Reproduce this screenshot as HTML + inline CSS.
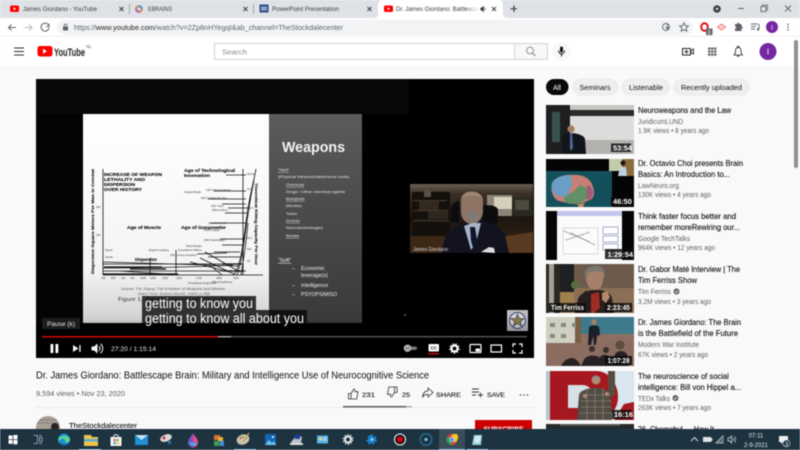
<!DOCTYPE html>
<html lang="en"><head><meta charset="utf-8"><title>Dr. James Giordano: Battlescape Brain - YouTube</title>
<style>
html,body{margin:0;padding:0;width:800px;height:450px;overflow:hidden;background:#f9f9f9}
svg{display:block;position:absolute;left:0;top:0}
text{font-family:"Liberation Sans",sans-serif;white-space:pre}
.tab{font-size:6.6px;fill:#3c4043}
.tt{font-size:8.6px;fill:#0f0f0f;stroke:#0f0f0f;stroke-width:.12}
.ch{font-size:7.2px;fill:#606060}
.du{font-size:7.4px;fill:#fff;font-weight:bold}
.ctl{font-size:6.6px;fill:#e8e8e8}
.cp{font-size:7.6px;fill:#0f0f0f}
.cb{font-size:6.6px;fill:#0f0f0f;stroke:#0f0f0f;stroke-width:.1}
.b{font-weight:bold;fill:#111;stroke:#111;stroke-width:.12}
.sl{fill:#e8e8e8;font-size:3.9px}
.sb{fill:#f2f2f2;font-size:5.4px}
</style></head><body>
<svg width="800" height="450" viewBox="0 0 800 450" xmlns="http://www.w3.org/2000/svg">
<defs>
<linearGradient id="slg" x1="0" y1="0" x2="0" y2="1"><stop offset="0" stop-color="#5b5b5b"/><stop offset=".5" stop-color="#4a4a4a"/><stop offset="1" stop-color="#3a3a3a"/></linearGradient>
<linearGradient id="wh" x1="0" y1="0" x2="0" y2="1"><stop offset="0" stop-color="#fff"/><stop offset=".75" stop-color="#f4f4f4"/><stop offset="1" stop-color="#cfcfcf"/></linearGradient>
<linearGradient id="ctrl" x1="0" y1="0" x2="0" y2="1"><stop offset="0" stop-color="#000" stop-opacity="0"/><stop offset="1" stop-color="#000" stop-opacity=".6"/></linearGradient>
<linearGradient id="fade" x1="0" y1="0" x2="1" y2="0"><stop offset="0" stop-color="#fff" stop-opacity="0"/><stop offset="1" stop-color="#fff"/></linearGradient>
<linearGradient id="wc" x1="0" y1="0" x2="0" y2="1"><stop offset="0" stop-color="#6a5f51"/><stop offset=".14" stop-color="#3a3026"/><stop offset=".5" stop-color="#1d1610"/><stop offset="1" stop-color="#3a2617"/></linearGradient>
<clipPath id="page"><rect x="0" y="0" width="800" height="429"/></clipPath>
<clipPath id="tabclip"><rect x="392" y="0" width="86" height="18"/></clipPath>
<clipPath id="th1"><rect x="546" y="105" width="88" height="49"/></clipPath>
<clipPath id="th2"><rect x="546" y="159" width="88" height="48"/></clipPath>
<clipPath id="th3"><rect x="546" y="211" width="88" height="49"/></clipPath>
<clipPath id="th4"><rect x="546" y="264" width="88" height="49"/></clipPath>
<clipPath id="th5"><rect x="546" y="317" width="88" height="49"/></clipPath>
<clipPath id="th6"><rect x="546" y="371" width="88" height="49"/></clipPath>
<clipPath id="cam"><rect x="410" y="184" width="123" height="69"/></clipPath>
<clipPath id="av"><circle cx="48" cy="428" r="12"/></clipPath>
</defs>
<g style="filter:blur(.45px)">
<!-- page -->
<rect width="800" height="450" fill="#f9f9f9"/>
<!-- Tab strip -->
<rect width="800" height="18" fill="#dee1e6"/>
<path d="M374 18c3 0 4-2 4-4V5c0-3 2-5 5-5h116c3 0 4 2 4 5v9c0 2 1 4 4 4z" fill="#fff"/>
<rect x="10" y="5.500" width="9" height="6.500" rx="1.500" fill="#f00"/><path d="M13.600 7.300v3l2.400-1.500z" fill="#fff"/>
<text class="tab" x="23" y="11" textLength="74" lengthAdjust="spacingAndGlyphs">James Giordano - YouTube</text>
<path d="M119.500 7l4 4m0-4l-4 4" stroke="#3c4043" stroke-width="1"/>
<rect x="129" y="4" width="1" height="10" fill="#a4a7ab"/>
<circle cx="139" cy="9" r="4" fill="#e0915a"/><path d="M139 5a4 4 0 0 1 4 4h-4z" fill="#55a7d8"/><path d="M135 9a4 4 0 0 0 4 4V9z" fill="#9a7cc5"/><circle cx="139" cy="9" r="1.300" fill="#eee"/>
<text class="tab" x="148" y="11" textLength="24" lengthAdjust="spacingAndGlyphs">EBRAINS</text>
<path d="M243.500 7l4 4m0-4l-4 4" stroke="#3c4043" stroke-width="1"/>
<rect x="253" y="4" width="1" height="10" fill="#a4a7ab"/>
<rect x="259.500" y="4.500" width="9" height="8" fill="#2e4a86"/><rect x="261" y="6.500" width="6" height="4" fill="#8fa3c9"/>
<text class="tab" x="272" y="11" textLength="67" lengthAdjust="spacingAndGlyphs">PowerPoint Presentation</text>
<path d="M367.500 7l4 4m0-4l-4 4" stroke="#3c4043" stroke-width="1"/>
<rect x="384" y="5.500" width="9" height="6.500" rx="1.500" fill="#f00"/><path d="M387.600 7.300v3l2.400-1.500z" fill="#fff"/>
<g clip-path="url(#tabclip)"><text class="tab" x="396" y="11" textLength="88" lengthAdjust="spacingAndGlyphs">Dr. James Giordano: Battlescape</text></g>
<rect x="466" y="3" width="13" height="12" fill="url(#fade)"/>
<path d="M480.500 7.500h1.500l2-1.800v6.600l-2-1.800h-1.500z M485 7.500a2 2 0 0 1 0 3" fill="#3c4043"/>
<path d="M492 7l4 4m0-4l-4 4" stroke="#3c4043" stroke-width="1"/>
<path d="M514 5.500v6.500M510.500 8.800h6.500" stroke="#3c4043" stroke-width="1.200"/>
<circle cx="717" cy="9" r="3.800" fill="#3c4043"/><path d="M715.300 8l1.700 2.500 1.700-2.500z" fill="#dee1e6"/>
<rect x="738" y="8" width="6" height="1" fill="#5f6368"/>
<rect x="761" y="6.500" width="5" height="5" fill="none" stroke="#5f6368" stroke-width=".9"/><path d="M762.500 6.300v-1.300h5v5h-1.200" fill="none" stroke="#5f6368" stroke-width=".8"/>
<path d="M785 5.500l6 6m0-6l-6 6" stroke="#5f6368" stroke-width=".9"/>
<!-- Toolbar -->
<rect y="18" width="800" height="18" fill="#fff"/>
<rect y="36" width="800" height=".6" fill="#e4e4e4"/>
<rect x="57" y="20" width="636" height="15" rx="7.500" fill="#f1f3f4"/>
<path d="M16 27.500H8.500m3-3l-3 3 3 3" fill="none" stroke="#5f6368" stroke-width="1"/>
<path d="M24.500 27.500H32m-3-3l3 3-3 3" fill="none" stroke="#b5b8bc" stroke-width="1"/>
<path d="M48.500 25a4 4 0 1 0 .5 3M49 23.800v2.800h-2.800" fill="none" stroke="#5f6368" stroke-width="1"/>
<rect x="63" y="26.500" width="5" height="4" rx=".6" fill="#5f6368"/><path d="M64.200 26.500v-1a1.300 1.300 0 0 1 2.600 0v1" fill="none" stroke="#5f6368" stroke-width=".8"/>
<text x="74" y="30" font-size="7.200" fill="#5f6368" textLength="269" lengthAdjust="spacingAndGlyphs">https://<tspan fill="#202124">www.youtube.com</tspan>/watch?v=2Zp8nHYegqI&amp;ab_channel=TheStockdalecenter</text>
<circle cx="666" cy="27" r="3.500" fill="none" stroke="#5f6368" stroke-width=".9"/><path d="M667.500 24v4.500m-2-1.500l2 2 2-2" fill="none" stroke="#5f6368" stroke-width=".9"/>
<path d="M684 22.800l1.300 2.900 3.100.3-2.300 2.100.7 3.100-2.800-1.600-2.800 1.600.7-3.100-2.300-2.100 3.100-.3z" fill="none" stroke="#5f6368" stroke-width=".9"/>
<ellipse cx="704.500" cy="27" rx="3.300" ry="3.800" fill="none" stroke="#e60000" stroke-width="1.800"/>
<rect x="706" y="28.500" width="6.500" height="6.500" fill="#666"/><text x="707.500" y="34" font-size="5" fill="#fff">3</text>
<path d="M717.500 27l4-3 4 3-4 3z" fill="#fbd0d0" stroke="#f87878" stroke-width="1"/>
<path d="M735 24h2a1.200 1.200 0 0 1 2.400 0h2.100v2.200a1.200 1.200 0 0 1 0 2.400v2.400h-6.500v-2.400a1.200 1.200 0 0 0 0-2.400z" fill="#5f6368"/>
<path d="M751 24h7M751 26.500h5M751 29h4" stroke="#5f6368" stroke-width=".9"/><path d="M759 24v5" stroke="#5f6368" stroke-width="1"/><circle cx="758" cy="29.500" r="1.200" fill="#5f6368"/>
<circle cx="772" cy="27" r="6" fill="#7627a2"/><text x="772" y="29.500" font-size="6.500" fill="#fff" text-anchor="middle">I</text>
<g fill="#5f6368"><circle cx="788" cy="24.300" r=".8"/><circle cx="788" cy="27" r=".8"/><circle cx="788" cy="29.700" r=".8"/></g>
<!-- Masthead -->
<rect y="36.600" width="800" height="29.400" fill="#fff"/>
<path d="M14 48h10M14 51.500h10M14 55h10" stroke="#303030" stroke-width="1"/>
<rect x="37.500" y="46" width="15" height="10.500" rx="2.500" fill="#f00"/><path d="M43 48.800v5l4-2.500z" fill="#fff"/>
<text x="54" y="56" font-size="11" fill="#212121" font-weight="bold" textLength="31" lengthAdjust="spacingAndGlyphs">YouTube</text>
<text x="86" y="48" font-size="4.500" fill="#606060">NL</text>
<rect x="214.500" y="43.500" width="300" height="16" fill="#fff" stroke="#d3d3d3"/>
<rect x="514.500" y="43.500" width="33" height="16" fill="#f8f8f8" stroke="#d3d3d3"/>
<text x="222" y="54.500" font-size="7.600" fill="#8a8a8a" textLength="25" lengthAdjust="spacingAndGlyphs">Search</text>
<circle cx="530" cy="50.500" r="3.400" fill="none" stroke="#777" stroke-width=".8"/><path d="M532.500 53l3 3" stroke="#777" stroke-width=".9"/>
<circle cx="561.500" cy="51.500" r="9.500" fill="#f8f8f8"/>
<rect x="560" y="46.500" width="3" height="6" rx="1.500" fill="#111"/><path d="M558.500 50.500c0 4.500 6 4.500 6 0M561.500 53.800v2.700" fill="none" stroke="#111" stroke-width="1"/>
<rect x="682.500" y="48.500" width="8" height="6.500" fill="none" stroke="#222" stroke-width="1"/><path d="M691 50.500l2.500-1.500v5l-2.500-1.500z" fill="none" stroke="#222" stroke-width=".9"/><path d="M684.500 51.800h4M686.500 49.800v4" stroke="#222" stroke-width="1"/>
<g fill="#666"><rect x="708" y="47.500" width="2.400" height="2.200"/><rect x="711" y="47.500" width="2.400" height="2.200"/><rect x="714" y="47.500" width="2.400" height="2.200"/><rect x="708" y="50.500" width="2.400" height="2.200"/><rect x="711" y="50.500" width="2.400" height="2.200"/><rect x="714" y="50.500" width="2.400" height="2.200"/><rect x="708" y="53.500" width="2.400" height="2.200"/><rect x="711" y="53.500" width="2.400" height="2.200"/><rect x="714" y="53.500" width="2.400" height="2.200"/></g>
<path d="M734 55h8.500c-1.200-1-1.500-2-1.500-4 0-2.200-1-3.500-2.700-3.500S735.500 48.800 735.500 51c0 2-.3 3-1.500 4zM737.200 47.500v-1h2v1M737 55.500c.3 1.200 2 1.200 2.300 0" fill="none" stroke="#222" stroke-width=".8"/>
<circle cx="768" cy="51.500" r="8.500" fill="#7627a2"/><text x="768" y="54.500" font-size="8" fill="#fff" text-anchor="middle">I</text>
<rect x="794" y="40" width="4" height="128" rx="2" fill="#909090"/>
<g clip-path="url(#page)">
<!-- Player -->
<rect x="36" y="79" width="498" height="279" fill="#000"/>
<rect x="36" y="79" width="373" height="35" fill="#080808"/>
<rect x="36" y="114" width="47" height="209" fill="#040404"/>
<rect x="83" y="114" width="186" height="209" fill="url(#wh)"/>
<rect x="269" y="114" width="93" height="209" fill="url(#slg)"/>
<!-- Chart -->
<g fill="none" stroke="#111" stroke-width=".8">
<path d="M103 169v106M103 275h160M243 169v106M103 271h143M103 264h140M103 262l136 4M103 268c40 0 100-1 130-3M120 271l60 4M150 258v17M176 250v25M200 258l34 16M190 262l40 10M222 275l-10 -8M234 275c8-12 10-40 13-60 2-16 6-30 9-46M237 275c6-16 8-44 11-60 2-14 4-26 6-34M241 275c3-18 5-30 7-52"/>
<path d="M208 257h32M214 252h26M205 252l35 20M197 254l30-1M226 175h20M214 191h32M208 199h38M222 204h24M228 208h20M225 213h22M210 223h36M220 239h24M222 245h22"/>
</g>
<g stroke="#111" stroke-width="1.300" fill="none"><path d="M103 274h75M104 267h58M130 269h36M222 264h20M224 271h20"/></g>
<g class="b">
<text x="104" y="176" font-size="4.300" font-weight="bold" textLength="58" lengthAdjust="spacingAndGlyphs">INCREASE OF WEAPON</text>
<text x="104" y="181" font-size="4.300" font-weight="bold" textLength="41" lengthAdjust="spacingAndGlyphs">LETHALITY AND</text>
<text x="104" y="186" font-size="4.300" font-weight="bold" textLength="31" lengthAdjust="spacingAndGlyphs">DISPERSION</text>
<text x="104" y="191" font-size="4.300" font-weight="bold" textLength="38" lengthAdjust="spacingAndGlyphs">OVER HISTORY</text>
<text x="184" y="172" font-size="4.500" font-weight="bold" textLength="51" lengthAdjust="spacingAndGlyphs">Age of Technological</text>
<text x="184" y="177" font-size="4.500" font-weight="bold" textLength="26" lengthAdjust="spacingAndGlyphs">Innovation</text>
<text x="127" y="229" font-size="4.500" font-weight="bold" textLength="34" lengthAdjust="spacingAndGlyphs">Age of Muscle</text>
<text x="181" y="229" font-size="4.500" font-weight="bold" textLength="45" lengthAdjust="spacingAndGlyphs">Age of Gunpowder</text>
<text x="135" y="261" font-size="4.300" font-weight="bold" textLength="22" lengthAdjust="spacingAndGlyphs">Dispersion</text>
<text transform="translate(94,274) rotate(-90)" font-size="3.800" font-weight="bold" textLength="105" lengthAdjust="spacingAndGlyphs">Dispersion Square Meters Per Man in Combat</text>
<text transform="translate(255,183) rotate(90)" font-size="3.800" font-weight="bold" textLength="82" lengthAdjust="spacingAndGlyphs">Theoretical Killing Capacity Per Hour</text>
</g>
<g font-size="2.600" fill="#333">
<text x="184" y="193">Guided Missile</text><text x="206" y="191">1967 Machine Airliner</text><text x="201" y="199">WW II Fighter Bomber</text><text x="211" y="207">WW I Tank</text><text x="212" y="211">Rifled Artillery</text><text x="208" y="224">Combat Aircraft</text><text x="204" y="231">WW II Fighter</text><text x="204" y="241">WW I Machinegun</text><text x="186" y="247">Rifled Musket</text><text x="178" y="251">Smoothbore Artillery</text><text x="170" y="256">16th Century Arquebus</text><text x="149" y="251">English Longbow</text><text x="105" y="251">Sword</text><text x="105" y="258">Javelin</text><text x="188" y="284">Smoothbore Small Arms</text><text x="212" y="283">Rifled Small Arms</text>
<text x="101" y="279">400</text><text x="111" y="279">500</text><text x="121" y="279">100</text><text x="130" y="279">100</text><text x="140" y="279">1000</text><text x="150" y="279">1200</text><text x="162" y="279">1300</text><text x="176" y="279">1500</text><text x="196" y="279">1700</text><text x="216" y="279">1800</text><text x="233" y="279">1900</text>
<text x="247" y="175">500 M</text><text x="247" y="190">50 M</text><text x="247" y="209">500 K</text><text x="247" y="239">50 K</text><text x="247" y="250">500</text><text x="247" y="262">50</text><text x="96" y="208">20K</text><text x="96" y="236">200</text>
</g>
<text x="121" y="290" font-size="3.500" fill="#555" textLength="104" lengthAdjust="spacingAndGlyphs">Source: T.N. Dupuy, The Evolution of Weapons and Warfare</text>
<text x="138" y="295" font-size="3.500" fill="#666" textLength="72" lengthAdjust="spacingAndGlyphs">(New York: Bobbs-Merrill, 1980) p.288</text>
<text x="118" y="301" font-size="5" fill="#333" textLength="132" lengthAdjust="spacingAndGlyphs">Figure 1.  Relationship of Lethality to Dispersion</text>
<!-- Weapons text -->
<text x="282" y="152" font-size="15" fill="#f4f4f4" font-weight="bold" textLength="63" lengthAdjust="spacingAndGlyphs">Weapons</text>
<text class="sl" x="278" y="171" text-decoration="underline">“Hard”</text>
<text class="sl" x="278" y="178" textLength="71" lengthAdjust="spacingAndGlyphs">(Physical influence/deterrence tools)</text>
<text class="sl" x="286" y="186" text-decoration="underline">Chemicals</text>
<text class="sl" x="286" y="193" textLength="59" lengthAdjust="spacingAndGlyphs">Drugs / Other chemical agents</text>
<text class="sl" x="286" y="200" text-decoration="underline">Biologicals</text>
<text class="sl" x="286" y="207">Microbes</text>
<text class="sl" x="286" y="215">Toxins</text>
<text class="sl" x="286" y="222" text-decoration="underline">Devices</text>
<text class="sl" x="286" y="229" textLength="37" lengthAdjust="spacingAndGlyphs">Neurotechnologies</text>
<text class="sl" x="286" y="237" text-decoration="underline">Biodata</text>
<text class="sb" x="278" y="262" text-decoration="underline">“Soft”</text>
<text class="sb" x="292" y="270">–</text><text class="sb" x="301" y="270">Economic</text>
<text class="sb" x="301" y="277">leverage(s)</text>
<text class="sb" x="292" y="287">–</text><text class="sb" x="301" y="287">Intelligence</text>
<text class="sb" x="292" y="296">–</text><text class="sb" x="301" y="296" textLength="36" lengthAdjust="spacingAndGlyphs">PSYOPS/MISO</text>
<!-- Webcam -->
<g clip-path="url(#cam)">
<rect x="410" y="184" width="123" height="69" fill="url(#wc)"/>
<!-- bookshelves -->
<rect x="412" y="192" width="38" height="44" fill="#14100c"/>
<g fill="#40352a"><rect x="413" y="200" width="34" height="1.300"/><rect x="413" y="210" width="36" height="1.300"/><rect x="413" y="220" width="36" height="1.300"/></g>
<rect x="419" y="201" width="20" height="9" fill="#33291f"/><rect x="428" y="211" width="20" height="8" fill="#2e261d"/><rect x="424" y="190" width="7" height="7" fill="#5b5043"/>
<!-- room right -->
<rect x="487" y="195" width="25" height="21" fill="#8b8476"/><rect x="494" y="197" width="18" height="12" fill="#d6cfbe"/>
<rect x="513" y="198" width="20" height="18" fill="#2a2721"/><rect x="515" y="200" width="14" height="10" fill="#4e4a40"/>
<path d="M497 253l4-16 32-5v21z" fill="#5a3a20"/>
<rect x="410" y="236" width="34" height="17" fill="#3c2817"/>
<!-- chair -->
<path d="M451 222v-14c0-4 6-7 8-7v22zM483 224v-18c6-2 15 0 15 4v14z" fill="#0c0c0e"/>
<!-- suit -->
<path d="M442 253c1-13 6-24 16-28l11-4 14 0c11 2 18 7 22 14l4 18z" fill="#12131f"/>
<!-- head -->
<path d="M461 199c1-10 20-10 22 0l0 13c-1 8-6 12-11 12-6 0-11-5-11-12z" fill="#8e7463"/>
<path d="M462 197c3-7 18-7 20 1-6-3-14-3-20-1z" fill="#a08676"/>
<path d="M466 213c3-2 10-2 13 0l-1 7-5 3-5-3z" fill="#7f7a75"/>
<!-- shirt/tie -->
<path d="M464 226l8-3 9 0-5 20-5 7z" fill="#a6b4c8"/>
<path d="M470 227l5 0 2 13-3 11-3-10z" fill="#10172a"/>
<path d="M481 252l8-5 5 1 1 5z" fill="#ddd"/>
<text x="413" y="251" font-size="5" fill="#ddd" textLength="35" lengthAdjust="spacingAndGlyphs">James Giordano</text>
</g>
<rect x="507" y="310" width="21" height="21" fill="#b9bcc0"/><circle cx="517.500" cy="320.500" r="8" fill="#d5d5d8" stroke="#39436a" stroke-width="1"/><path d="M517.500 314l1.800 4.600h5l-4 3 1.500 4.800-4.300-2.900-4.300 2.900 1.500-4.800-4-3h5z" fill="#8a7d40" stroke="#2b3260" stroke-width=".6"/>
<circle cx="405" cy="315" r=".8" fill="#aaa"/>
<rect x="36" y="318" width="498" height="40" fill="url(#ctrl)"/>
<!-- Captions -->
<rect x="142" y="296" width="114" height="14" fill="#080808" fill-opacity=".8"/>
<rect x="142" y="310" width="165" height="14" fill="#080808" fill-opacity=".8"/>
<text x="145" y="308" font-size="13.500" fill="#fff" textLength="108" lengthAdjust="spacingAndGlyphs">getting to know you</text>
<text x="145" y="323" font-size="13.500" fill="#fff" textLength="159" lengthAdjust="spacingAndGlyphs">getting to know all about you</text>
<!-- Tooltip -->
<rect x="42" y="318" width="38" height="11" rx="1" fill="#1c1c1c"/>
<text x="47" y="326" font-size="6.200" fill="#e6e6e6" textLength="28" lengthAdjust="spacingAndGlyphs">Pause (k)</text>
<!-- Progress -->
<rect x="42" y="336" width="485" height="1.400" fill="#55555a"/>
<rect x="42" y="336" width="189" height="1.400" fill="#a6a6a6"/>
<rect x="42" y="336" width="176" height="1.400" fill="#d80000"/>
<!-- Controls -->
<rect x="50.500" y="344" width="2.800" height="9" fill="#fff"/><rect x="55.500" y="344" width="2.800" height="9" fill="#fff"/>
<path d="M73 345v7l5.500-3.500z" fill="#f2f2f2"/><rect x="79.300" y="345" width="1.300" height="7" fill="#f2f2f2"/>
<path d="M91.500 346.500h2.500l3.500-3v10l-3.500-3h-2.500z" fill="#f2f2f2"/><path d="M99 346a3.500 3.500 0 0 1 0 5M100.500 343.800a6 6 0 0 1 0 9.400" fill="none" stroke="#f2f2f2" stroke-width="1"/>
<text class="ctl" x="111" y="351" textLength="45" lengthAdjust="spacingAndGlyphs">27:20 / 1:15:14</text>
<rect x="405" y="346.500" width="12" height="3.500" rx="1.700" fill="#777"/><circle cx="407.500" cy="348.300" r="3.700" fill="#b8b8b8"/><path d="M406.500 346.800v3M408.500 346.800v3" stroke="#444" stroke-width=".7"/>
<rect x="428.500" y="344" width="10.500" height="7.500" rx="1" fill="#fff"/><text x="433.700" y="349.500" font-size="4.500" font-weight="bold" fill="#222" text-anchor="middle">CC</text><rect x="428" y="353" width="11" height="1.500" fill="#d40000"/>
<circle cx="454.500" cy="348.500" r="3" fill="none" stroke="#fff" stroke-width="2.200"/><circle cx="454.500" cy="348.500" r="4.600" fill="none" stroke="#fff" stroke-width="1.300" stroke-dasharray="1.600 1.600"/>
<rect x="470" y="344.500" width="11" height="8" rx=".8" fill="none" stroke="#fff" stroke-width="1.200"/><rect x="475.500" y="348.500" width="4.500" height="3" fill="#fff"/>
<rect x="491" y="345" width="10.500" height="7" fill="none" stroke="#fff" stroke-width="1.200"/>
<path d="M513 347v-3h3M519 344h3v3M522 350v3h-3M516 353h-3v-3" fill="none" stroke="#fff" stroke-width="1.200"/>
<!-- Under player -->
<text x="36" y="378.500" font-size="10" fill="#0f0f0f" textLength="393" lengthAdjust="spacingAndGlyphs">Dr. James Giordano: Battlescape Brain: Military and Intelligence Use of Neurocognitive Science</text>
<text x="36" y="396" font-size="7.200" fill="#606060" textLength="89" lengthAdjust="spacingAndGlyphs">9,594 views • Nov 23, 2020</text>
<path d="M348.500 393.500h2.500v5.500h-2.500zM351 393.500l2.800-4.500c1.200 0 1.300 1.200 1 2.700h3.200l-1.300 7.300H351" fill="none" stroke="#333" stroke-width=".8"/>
<text class="cb" x="362" y="397" textLength="13" lengthAdjust="spacingAndGlyphs">231</text>
<path d="M397 392.500h-2.500V387H397zM394.500 392.500l-2.800 4.500c-1.200 0-1.300-1.200-1-2.700h-3.200l1.300-7.300h5.700" fill="none" stroke="#333" stroke-width=".8"/>
<text class="cb" x="402" y="397" textLength="8" lengthAdjust="spacingAndGlyphs">25</text>
<path d="M428 388l5 4.500-5 4.500v-2.700c-3 0-4.500 1-5.500 3.200.3-4.500 2.500-6.500 5.500-6.700z" fill="none" stroke="#333" stroke-width=".8"/>
<text class="cb" x="436" y="397" textLength="25" lengthAdjust="spacingAndGlyphs">SHARE</text>
<path d="M472 389h7M472 392h7M472 395h4M478 395h5M480.500 392.500v5" stroke="#333" stroke-width=".9"/>
<text class="cb" x="487" y="397" textLength="18" lengthAdjust="spacingAndGlyphs">SAVE</text>
<g fill="#444"><circle cx="520.500" cy="395" r=".8"/><circle cx="524" cy="395" r=".8"/><circle cx="527.500" cy="395" r=".8"/></g>
<rect x="36" y="407" width="498" height=".7" fill="#e3e3e3"/>
<rect x="343" y="406" width="69" height="1.400" fill="#aaa"/><rect x="343" y="406" width="63" height="1.400" fill="#555"/>
<g clip-path="url(#av)"><rect x="36" y="416" width="24" height="24" fill="#a89f95"/><path d="M36 420h24M36 423h24" stroke="#8a8178" stroke-width="1"/><circle cx="55" cy="427" r="4" fill="#2a2422"/></g>
<text x="69" y="428" font-size="7.200" fill="#0f0f0f" stroke="#0f0f0f" stroke-width=".1" textLength="68" lengthAdjust="spacingAndGlyphs">TheStockdalecenter</text>
<rect x="475" y="420" width="57" height="14" rx="1" fill="#cc0000"/>
<text x="503.500" y="431" font-size="6.800" font-weight="bold" fill="#fff" text-anchor="middle">SUBSCRIBE</text>
<!-- Chips -->
<rect x="546" y="79" width="22.500" height="16" rx="8" fill="#0a0a0a"/><text x="557" y="90" font-size="7.200" fill="#fff" text-anchor="middle">All</text>
<rect x="573" y="79" width="44.500" height="16" rx="8" fill="#efefef" stroke="#e2e2e2" stroke-width=".6"/><text class="cp" x="579.500" y="90" textLength="31" lengthAdjust="spacingAndGlyphs">Seminars</text>
<rect x="622" y="79" width="47.500" height="16" rx="8" fill="#efefef" stroke="#e2e2e2" stroke-width=".6"/><text class="cp" x="629" y="90" textLength="34" lengthAdjust="spacingAndGlyphs">Listenable</text>
<rect x="674" y="79" width="75" height="16" rx="8" fill="#efefef" stroke="#e2e2e2" stroke-width=".6"/><text class="cp" x="681" y="90" textLength="61" lengthAdjust="spacingAndGlyphs">Recently uploaded</text>
<!-- Thumb 1 -->
<g clip-path="url(#th1)">
<rect x="546" y="105" width="88" height="49" fill="#c8c7c3"/><rect x="546" y="105" width="24" height="49" fill="#1d1f20"/><rect x="570" y="110" width="64" height="6" fill="#2a2a2a"/><rect x="570" y="116" width="64" height="24" fill="#dcdcdb"/><rect x="570" y="140" width="64" height="14" fill="#b3b2ae"/>
<rect x="552" y="112" width="8" height="30" fill="#39524f"/>
<circle cx="571" cy="129" r="3.600" fill="#a57b64"/><path d="M562 154v-17c0-3 4-4 9-4s13 2 14 6l1 15z" fill="#12151b"/><path d="M570 133h2l1 15-2 3-1-3z" fill="#53689c"/>
<rect x="611" y="143.500" width="20" height="8.500" fill="#111" fill-opacity=".85"/><text class="du" x="613" y="150.500">53:54</text>
</g>
<!-- Thumb 2 -->
<g clip-path="url(#th2)">
<rect x="546" y="159" width="88" height="48" fill="#050505"/><rect x="546" y="171" width="66" height="36" fill="#14505c"/><rect x="609" y="159" width="13" height="12" fill="#c3cca8"/><rect x="622" y="159" width="12" height="17" fill="#8b6d3e"/>
<circle cx="623" cy="163" r="2.500" fill="#1c1410"/><path d="M618 176l2-9h6l1 9z" fill="#bcd2de"/>
<path d="M552 183c3-6 14-9 21-8 9-1 18 3 20 12 2 6 1 11-3 13l-8 3-6 1c-7 0-12-2-17-3-6-2-9-11-7-18z" fill="#c67f74"/>
<path d="M552 183c3-6 12-8 19-8l1 10-5 11c-5 1-10 0-12-2-3-3-4-7-3-11z" fill="#6a9ec6"/>
<path d="M564 197l10-6 6-6 7 3 1 10-8 5-10 1-6-3z" fill="#629067"/>
<path d="M587 185c3 0 6 4 6 9l-3 6-3-1z" fill="#a55a7a"/>
<path d="M577 204c3 0 6 0 8-2l-2 5h-4z" fill="#c69060"/>
<rect x="611" y="197" width="21" height="9" fill="#0a0a0a"/><text class="du" x="613" y="203.800">46:50</text>
</g>
<!-- Thumb 3 -->
<g clip-path="url(#th3)">
<rect x="546" y="211" width="88" height="49" fill="#050505"/><rect x="557" y="211" width="65" height="49" fill="#fbfbfb"/><rect x="557" y="211" width="65" height="5" fill="#c4c5ef"/>
<path d="M564 231l26 11M566 240l24-8M571 233l24 12" stroke="#777" stroke-width="1" stroke-dasharray="1.500 1"/><rect x="563" y="228" width="35" height="26" fill="none" stroke="#aaa" stroke-width=".4"/>
<rect x="603" y="227" width="15" height="7" fill="#fff" stroke="#6a7aaa" stroke-width=".6"/><rect x="603" y="236" width="15" height="6" fill="#fff" stroke="#6a7aaa" stroke-width=".6"/><rect x="603" y="244" width="15" height="6" fill="#fff" stroke="#6a7aaa" stroke-width=".6"/>
<rect x="605" y="249" width="28" height="10" fill="#0c0c0c" fill-opacity=".85"/><text class="du" x="607.500" y="257">1:29:54</text>
</g>
<!-- Thumb 4 -->
<g clip-path="url(#th4)">
<rect x="546" y="264" width="88" height="49" fill="#8b6f55"/><rect x="546" y="264" width="14" height="49" fill="#2d2720"/><rect x="549" y="264" width="5" height="49" fill="#a3a098"/><rect x="560" y="264" width="14" height="32" fill="#1e2021"/><rect x="574" y="264" width="60" height="24" fill="#6d5a4c"/><rect x="560" y="292" width="14" height="21" fill="#a17f4e"/><circle cx="575" cy="285" r="4" fill="#596d3f"/>
<path d="M575 313l3-14c2-6 10-8 14-9h8c6 1 10 3 12 8l2 15z" fill="#2a1d1b"/><path d="M591 294l8-2 1 16-6 5h-3z" fill="#9b2d25"/>
<path d="M585 273c0-4 7-7 12-6s8 4 7 9l-2 9c-2 4-5 5-8 5-5-1-8-6-9-17z" fill="#a68068"/><path d="M585 274c0-6 7-9 13-8 5 1 8 5 7 10l-3-4-8-1-6 2-1 6z" fill="#7a7670"/>
<path d="M602 293l5-2 3 6-4 6-4-3z" fill="#b58970"/><rect x="584" y="291" width="5" height="14" rx="2" fill="#222"/>
<rect x="549" y="303" width="37" height="9" fill="#0a0a0a" fill-opacity=".85"/><text class="du" x="551" y="310" textLength="33" lengthAdjust="spacingAndGlyphs">Tim Ferriss</text>
<rect x="605" y="303" width="27" height="9" fill="#0a0a0a" fill-opacity=".85"/><text class="du" x="607" y="310" textLength="23" lengthAdjust="spacingAndGlyphs">2:23:45</text>
</g>
<!-- Thumb 5 -->
<g clip-path="url(#th5)">
<rect x="546" y="317" width="88" height="49" fill="#8c6f61"/><rect x="546" y="317" width="35" height="26" fill="#cfd0c4"/><rect x="581" y="317" width="53" height="17" fill="#3e7a8c"/><rect x="575" y="317" width="6" height="49" fill="#7b5f42"/>
<g fill="#8a8a78"><rect x="550" y="323" width="5" height="4"/><rect x="561" y="323" width="5" height="4"/><rect x="572" y="323" width="4" height="4"/><rect x="550" y="334" width="5" height="4"/><rect x="561" y="334" width="5" height="4"/></g>
<rect x="546" y="343" width="88" height="23" fill="#8b6c60"/>
<circle cx="594" cy="322" r="2.700" fill="#a68060"/><path d="M588 345l1-18c2-2 8-2 10 0l1 8-3 1-1 9h-2l-1-9-2 9z" fill="#1b1f28"/>
<path d="M581 366l4-8c4-3 10-3 14-1l3 9zM597 366l3-9c3-3 7-3 9 0l3 9zM612 366l3-12c3-4 9-4 12 0l2 12zM561 366c3-6 7-8 12-8 4 2 6 4 8 8z" fill="#262023"/>
<circle cx="592" cy="349" r="3" fill="#3a2f2b"/><circle cx="606" cy="350" r="3" fill="#3a2f2b"/><circle cx="620" cy="345" r="4.500" fill="#5c4b3f"/>
<rect x="605" y="356" width="27" height="9" fill="#0a0a0a" fill-opacity=".85"/><text class="du" x="607.500" y="363" textLength="22" lengthAdjust="spacingAndGlyphs">1:07:28</text>
</g>
<!-- Thumb 6 -->
<g clip-path="url(#th6)">
<rect x="546" y="371" width="88" height="49" fill="#d8e6ef"/><rect x="546" y="371" width="4" height="49" fill="#b9c6cf"/>
<path d="M550 371h46c14 0 22 14 22 26s-8 23-24 23h-44z" fill="#a5181f"/>
<path d="M568 385h14c8 0 11 6 11 12s-3 11-11 11h-14z" fill="#d5e0e6"/>
<rect x="608" y="371" width="7" height="25" fill="#574c3e"/><path d="M614 420l10-16 10-2v18z" fill="#a5181f"/>
<circle cx="596" cy="380" r="4.500" fill="#b08a72"/><path d="M592 378c1-3 7-3 8 0z" fill="#8d8d8d"/>
<path d="M577 420l2-25c1-5 10-7 17-7s14 3 15 7l1 25z" fill="#514c44"/><path d="M582 395h28M581 401h30M581 407h30M580 413h32M587 388v32M595 388v32M603 388v32" stroke="#877f70" stroke-width=".8"/>
<circle cx="585" cy="396" r="2" fill="#b08a72"/><circle cx="607" cy="394" r="2" fill="#b08a72"/>
<rect x="612" y="410" width="20" height="9" fill="#0a0a0a" fill-opacity=".85"/><text class="du" x="614" y="417">16:16</text>
</g>
<!-- Thumb 7 -->
<rect x="546" y="424" width="88" height="5" fill="#26292c"/><rect x="560" y="424" width="60" height="2" fill="#55585b"/>
<!-- Sidebar text -->
<text class="tt" x="638" y="113" textLength="93" lengthAdjust="spacingAndGlyphs">Neuroweapons and the Law</text>
<text class="ch" x="638" y="124" textLength="45" lengthAdjust="spacingAndGlyphs">JuridicumLUND</text>
<text class="ch" x="638" y="133" textLength="71" lengthAdjust="spacingAndGlyphs">1.9K views • 8 years ago</text>
<text class="tt" x="638" y="166" textLength="105" lengthAdjust="spacingAndGlyphs">Dr. Octavio Choi presents Brain</text>
<text class="tt" x="638" y="177" textLength="92" lengthAdjust="spacingAndGlyphs">Basics: An Introduction to...</text>
<text class="ch" x="638" y="188" textLength="41" lengthAdjust="spacingAndGlyphs">LawNeuro.org</text>
<text class="ch" x="638" y="197" textLength="73" lengthAdjust="spacingAndGlyphs">130K views • 4 years ago</text>
<text class="tt" x="638" y="219" textLength="98" lengthAdjust="spacingAndGlyphs">Think faster focus better and</text>
<text class="tt" x="638" y="230" textLength="102" lengthAdjust="spacingAndGlyphs">remember moreRewiring our...</text>
<text class="ch" x="638" y="241" textLength="52" lengthAdjust="spacingAndGlyphs">Google TechTalks</text>
<text class="ch" x="638" y="250" textLength="77" lengthAdjust="spacingAndGlyphs">964K views • 12 years ago</text>
<text class="tt" x="638" y="272" textLength="102" lengthAdjust="spacingAndGlyphs">Dr. Gabor Maté Interview | The</text>
<text class="tt" x="638" y="283" textLength="59" lengthAdjust="spacingAndGlyphs">Tim Ferriss Show</text>
<text class="ch" x="638" y="294" textLength="33" lengthAdjust="spacingAndGlyphs">Tim Ferriss</text>
<circle cx="676.500" cy="291.500" r="3" fill="#606060"/><path d="M675 291.500l1.100 1.100 1.900-2" fill="none" stroke="#fff" stroke-width=".7"/>
<text class="ch" x="638" y="304" textLength="73" lengthAdjust="spacingAndGlyphs">3.2M views • 3 years ago</text>
<text class="tt" x="638" y="325" textLength="103" lengthAdjust="spacingAndGlyphs">Dr. James Giordano: The Brain</text>
<text class="tt" x="638" y="336" textLength="100" lengthAdjust="spacingAndGlyphs">is the Battlefield of the Future</text>
<text class="ch" x="638" y="347" textLength="61" lengthAdjust="spacingAndGlyphs">Modern War Institute</text>
<text class="ch" x="638" y="357" textLength="70" lengthAdjust="spacingAndGlyphs">67K views • 2 years ago</text>
<text class="tt" x="638" y="379" textLength="91" lengthAdjust="spacingAndGlyphs">The neuroscience of social</text>
<text class="tt" x="638" y="390" textLength="103" lengthAdjust="spacingAndGlyphs">intelligence: Bill von Hippel a...</text>
<text class="ch" x="638" y="401" textLength="32" lengthAdjust="spacingAndGlyphs">TEDx Talks</text>
<circle cx="675.500" cy="398" r="3" fill="#606060"/><path d="M674 398l1.100 1.100 1.900-2" fill="none" stroke="#fff" stroke-width=".7"/>
<text class="ch" x="638" y="410" textLength="73" lengthAdjust="spacingAndGlyphs">263K views • 7 years ago</text>
<text class="tt" x="638" y="432" textLength="76" lengthAdjust="spacingAndGlyphs">26. Chernobyl — How It</text>
</g>
<!-- Taskbar -->
<rect y="429" width="800" height="21" fill="#1d3340"/>
<rect x="439" y="429" width="26" height="21" fill="#3a4d59"/>
<rect x="79" y="449" width="22" height="1" fill="#7fb4dc"/><rect x="234" y="449" width="22" height="1" fill="#7fb4dc"/><rect x="439" y="449" width="26" height="1" fill="#7fb4dc"/><rect x="467" y="449" width="21" height="1" fill="#7fb4dc"/>
<g fill="#fff"><rect x="8.500" y="435.500" width="4" height="3.800"/><rect x="13.300" y="435" width="4.200" height="4.300"/><rect x="8.500" y="440" width="4" height="3.800"/><rect x="13.300" y="440" width="4.200" height="4.300"/></g>
<path d="M33.500 435.500h4v8h-4M39 435.500h3M39 443.500h3M39.500 437.500h2.500v4h-2.500z" fill="none" stroke="#aab5bc" stroke-width=".8"/>
<circle cx="64" cy="439.500" r="6" fill="#1a8fd0"/><path d="M58 440c1-5 10-6 12-1 .5 3-3 4-5 3 1-2-1-4-3-3-2 .5-3 2-4 1z" fill="#5ed69a"/><path d="M60 443c2 2 6 3 9 0" stroke="#0d5a9e" fill="none"/>
<path d="M84 435h7l1 2h6v9H84z" fill="#f0c34a"/><rect x="84" y="439" width="14" height="2.500" fill="#5aa9d8"/>
<path d="M110.500 437h11v9h-11z" fill="#f2f2f2"/><path d="M113.500 437c0-3 5-3 5 0" fill="none" stroke="#eee"/><g><rect x="113.500" y="439" width="2.200" height="2.200" fill="#e44"/><rect x="116.500" y="439" width="2.200" height="2.200" fill="#6b3"/><rect x="113.500" y="442" width="2.200" height="2.200" fill="#39d"/><rect x="116.500" y="442" width="2.200" height="2.200" fill="#fb3"/></g>
<rect x="135" y="435" width="13" height="10" fill="#1f8fd6"/><path d="M135 435l6.500 5 6.500-5" fill="#bfe2f7"/>
<ellipse cx="166" cy="438" rx="6" ry="3.500" fill="#d9d9dd" transform="rotate(-20 166 438)"/><circle cx="164" cy="438" r="1.500" fill="#c33"/><path d="M168 441l3 3M171 441l-3 3" stroke="#2a8cc7" stroke-width="1"/>
<path d="M193 433.500c3 4 5 6 5 9a5 5 0 0 1-10 0c0-3 2-5 5-9z" fill="#7a50c8"/><path d="M193 433.500c3 4 5 6 5 9a5 5 0 0 1-5 5z" fill="#e24a8a"/><path d="M189 443c2-1 7-1 8 1a5 5 0 0 1-8-1z" fill="#3bb0e8"/>
<rect x="214" y="435" width="6" height="5" fill="#d9702e"/><rect x="218" y="437" width="5" height="4" fill="#e8b13c"/><rect x="214" y="441" width="5" height="5" fill="#3aa055"/><rect x="219.500" y="441" width="4.500" height="5" fill="#3f8dd0"/>
<ellipse cx="243" cy="439.500" rx="6.500" ry="5" fill="#c9c4b2" transform="rotate(-20 243 439.500)"/><circle cx="240.500" cy="438" r="1" fill="#d33"/><circle cx="243" cy="437" r="1" fill="#3a3"/><circle cx="246" cy="438" r="1" fill="#37c"/><path d="M243 442l6-9" stroke="#d8a24a" stroke-width="1.300"/>
<rect x="265" y="434" width="11" height="11" fill="#1268b3"/><path d="M265 445l4-5 3 3 2-2 2 4z" fill="#6ec3f0"/><circle cx="273" cy="437" r="1" fill="#fff"/>
<path d="M291 442l6-7 5 2-1 6-8 2z" fill="#b9c2cc"/><rect x="295" y="435" width="5" height="4" fill="#1a3ea8"/><rect x="290" y="443" width="13" height="2" fill="#ddd"/>
<rect x="317" y="435.500" width="11" height="8" fill="#5ab2e8"/><rect x="319" y="437.500" width="3" height="3" fill="#f1d779"/><path d="M323 438h4M323 440h4" stroke="#e5f3fb" stroke-width=".7"/>
<circle cx="348" cy="439.500" r="3" fill="none" stroke="#fff" stroke-width="1.700"/><circle cx="348" cy="439.500" r="4.700" fill="none" stroke="#fff" stroke-width="1.200" stroke-dasharray="1.500 1.500"/>
<path d="M372 434l1.500 3 3-1-1 3 2 2-3 1-1 3-2-2-3 2 0-3-3-1 3-2-1-2z" fill="#1884d0"/><circle cx="372" cy="439.500" r="1.200" fill="#bfe5fb"/>
<circle cx="400" cy="439.500" r="5.500" fill="#111" stroke="#fff" stroke-width="1"/><circle cx="400" cy="439.500" r="3" fill="#e00010"/>
<circle cx="426" cy="439.500" r="5.800" fill="none" stroke="#2b7fb8" stroke-width="1"/><circle cx="426" cy="439.500" r="1.600" fill="#7cc0ea"/>
<circle cx="452" cy="439.500" r="5.500" fill="#dc4437"/><path d="M452 439.500l-4.700-2.800a5.500 5.500 0 0 0 4 8.300z" fill="#2ea44f"/><path d="M452 434h5a5.500 5.500 0 0 1-1.900 8.200l-3.100-2.700z" fill="#f5c518"/><circle cx="452" cy="439.500" r="2.500" fill="#fff"/><circle cx="452" cy="439.500" r="1.900" fill="#4285f4"/>
<path d="M474 435h8l-1 10h-9z" fill="#8fd0d8"/><path d="M475 436h6l-1 7h-6z" fill="#cdebee"/>
<path d="M691 441l3.500-3.500 3.500 3.500" fill="none" stroke="#dfe5e8" stroke-width=".9"/>
<rect x="703" y="437" width="8" height="5" fill="#dfe5e8"/><rect x="711" y="438" width="1.300" height="3" fill="#dfe5e8"/>
<path d="M716 443l7-7v7z" fill="none" stroke="#aab5bc" stroke-width=".9"/><path d="M719 443v-3M721 443v-5" stroke="#aab5bc" stroke-width=".8"/>
<path d="M728 438h1.500l2-2v7l-2-2H728zM733 438a2.500 2.500 0 0 1 0 3M734.500 436.500a4.500 4.500 0 0 1 0 6" fill="none" stroke="#dfe5e8" stroke-width=".7"/>
<text x="756" y="437.500" font-size="6" fill="#e6eaec" text-anchor="middle">07:11</text>
<text x="756" y="447" font-size="6" fill="#e6eaec" text-anchor="middle">2-9-2021</text>
<path d="M779 436h9v6h-5l-2 2v-2h-2z" fill="#eef1f2"/><circle cx="786.500" cy="443.500" r="3.500" fill="#1d3340" stroke="#dfe5e8" stroke-width=".6"/><text x="786.500" y="445.800" font-size="5.500" fill="#fff" text-anchor="middle">3</text>
</g>
</svg>
</body></html>
